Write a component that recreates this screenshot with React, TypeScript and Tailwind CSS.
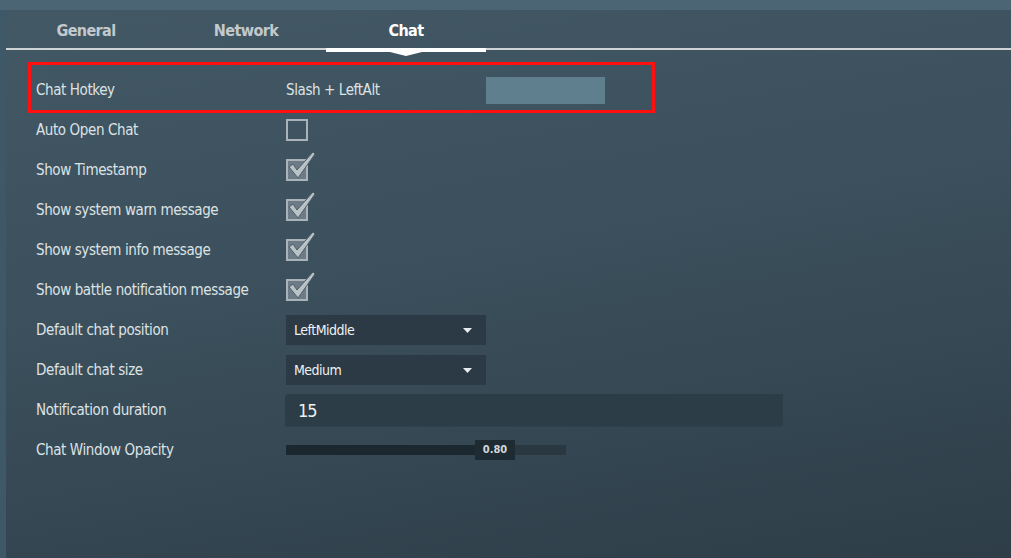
import React from "react";

const font = { fontFamily: '"DejaVu Sans Condensed", "Liberation Sans", sans-serif' };

function Check({ checked }: { checked: boolean }) {
  return (
    <div className="relative w-[22px] h-[22px]">
      <div className={`w-[22px] h-[22px] border-2 border-[#aab3b9] ${checked ? "bg-[#6c7b85]" : ""}`} />
      {checked && (
        <svg className="absolute left-[2px] top-[-7px]" width="28" height="28" viewBox="0 0 28 28">
          <path d="M1 15 L5 12 L9 18 L25 0 L27 2 L10 26 Z" fill="#b8c1c6" stroke="#4f5d66" strokeWidth="1" strokeLinejoin="round" />
        </svg>
      )}
    </div>
  );
}

function Caret() {
  return (
    <svg width="9" height="5" viewBox="0 0 9 5">
      <path d="M0 0 L9 0 L4.5 5 Z" fill="#e8ecee" />
    </svg>
  );
}

function Row({ label, children }: { label: string; children?: React.ReactNode }) {
  return (
    <div className="flex items-center h-[40px]">
      <div className="w-[250px] text-[15px] tracking-[-0.4px] text-[#dde2e5]">{label}</div>
      <div className="flex items-center">{children}</div>
    </div>
  );
}

export default function App() {
  return (
    <div className="w-[1011px] h-[558px] overflow-hidden bg-[#4b6574] pt-[10px]" style={font}>
      <div className="flex h-full">
        <div className="w-[6px] bg-[#3f5867]" />
        <div className="flex-1 h-full bg-[linear-gradient(170deg,#435865_0%,#3b505c_45%,#2e3d48_100%)]">
          <div className="flex h-[40px] border-b-2 border-[#cfd3d5]">
            {["General", "Network", "Chat"].map((t, i) => (
              <div key={t} className="relative w-[160px] flex items-center justify-center pt-[4px]">
                <span className={`text-[16px] font-bold tracking-[-0.6px] ${i === 2 ? "text-white" : "text-[#c3c9cd]"}`}>{t}</span>
                {i === 2 && (
                  <>
                    <div className="absolute left-0 right-0 bottom-[-4px] h-[4px] bg-white" />
                    <div className="absolute left-1/2 -translate-x-1/2 bottom-[-8px] w-0 h-0 border-l-[16px] border-r-[16px] border-t-[4px] border-l-transparent border-r-transparent border-t-white" />
                  </>
                )}
              </div>
            ))}
          </div>
          <div className="pl-[30px] pt-[20px]">
            <div className="relative">
              <div className="absolute left-[-8px] top-[-8px] w-[627px] h-[51px] border-[3px] border-[#ff1010]" />
              <Row label="Chat Hotkey">
                <span className="text-[15px] tracking-[-0.4px] text-[#dde2e5] w-[200px]">Slash + LeftAlt</span>
                <div className="w-[119px] h-[27px] bg-[#5f7f8f]" />
              </Row>
            </div>
            <Row label="Auto Open Chat"><Check checked={false} /></Row>
            <Row label="Show Timestamp"><Check checked /></Row>
            <Row label="Show system warn message"><Check checked /></Row>
            <Row label="Show system info message"><Check checked /></Row>
            <Row label="Show battle notification message"><Check checked /></Row>
            <Row label="Default chat position">
              <div className="w-[200px] h-[30px] bg-[#2b3a45] flex items-center justify-between pl-[8px] pr-[14px]">
                <span className="text-[14px] tracking-[-0.5px] text-[#eef1f2]">LeftMiddle</span>
                <Caret />
              </div>
            </Row>
            <Row label="Default chat size">
              <div className="w-[200px] h-[30px] bg-[#2b3a45] flex items-center justify-between pl-[8px] pr-[14px]">
                <span className="text-[14px] tracking-[-0.5px] text-[#eef1f2]">Medium</span>
                <Caret />
              </div>
            </Row>
            <Row label="Notification duration">
              <div className="ml-[-1px] w-[498px] h-[33px] bg-[#2d3d48] flex items-center pl-[13px] [clip-path:polygon(3px_0,100%_0,100%_calc(100%-2px),calc(100%-2px)_100%,0_100%,0_3px)]">
                <span className="text-[18px] tracking-[-1px] text-[#eef1f2]">15</span>
              </div>
            </Row>
            <Row label="Chat Window Opacity">
              <div className="relative w-[280px] h-[10px] bg-[#2a3842]">
                <div className="w-[190px] h-full bg-[#1c2830]" />
                <div className="absolute left-[189px] top-[-5px] w-[40px] h-[20px] bg-[#1f2b33] flex items-center justify-center">
                  <span className="text-[11px] font-bold text-[#d3d8db]">0.80</span>
                </div>
              </div>
            </Row>
          </div>
        </div>
      </div>
    </div>
  );
}
